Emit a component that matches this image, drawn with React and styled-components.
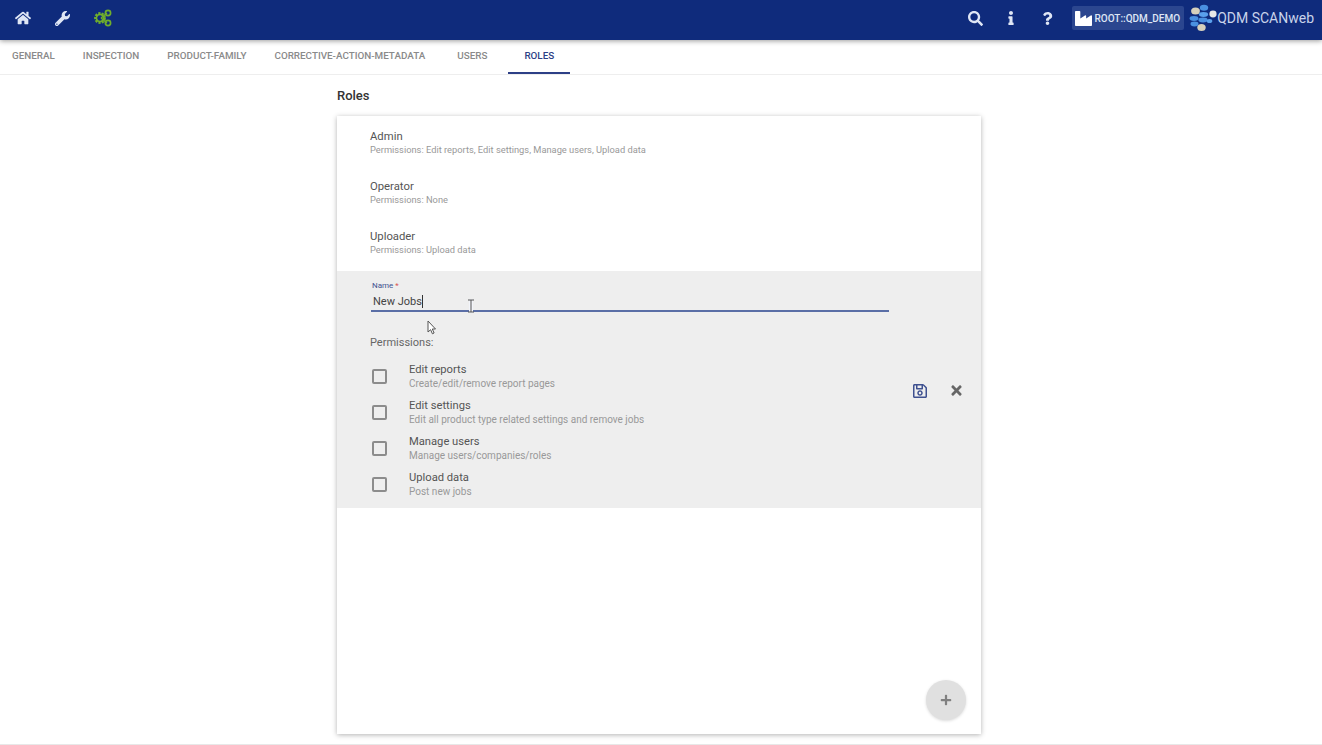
import styled, { createGlobalStyle } from "styled-components"
import { FaHome, FaWrench, FaSearch, FaInfo, FaQuestion, FaIndustry, FaRegSave, FaTimes, FaPlus } from "react-icons/fa"

const tabs = ["GENERAL", "INSPECTION", "PRODUCT-FAMILY", "CORRECTIVE-ACTION-METADATA", "USERS", "ROLES"]

const roles = [
  { name: "Admin", perms: "Permissions: Edit reports, Edit settings, Manage users, Upload data" },
  { name: "Operator", perms: "Permissions: None" },
  { name: "Uploader", perms: "Permissions: Upload data" },
]

const permissions = [
  { title: "Edit reports", text: "Create/edit/remove report pages" },
  { title: "Edit settings", text: "Edit all product type related settings and remove jobs" },
  { title: "Manage users", text: "Manage users/companies/roles" },
  { title: "Upload data", text: "Post new jobs" },
]

function GearsIcon() {
  return (
    <svg width="19" height="18" viewBox="0 0 19 18" fill="none">
      <path d="M8 9 L14 4 M8 9 L14 14" stroke="#6fae2c" strokeWidth="1.4" />
      <circle cx="7" cy="9" r="4.4" stroke="#6fae2c" strokeWidth="3" strokeDasharray="2 1.1" />
      <circle cx="7" cy="9" r="3.6" stroke="#6fae2c" strokeWidth="1.6" />
      <circle cx="15" cy="4" r="2.6" stroke="#6fae2c" strokeWidth="1.7" />
      <circle cx="15" cy="14" r="2.6" stroke="#6fae2c" strokeWidth="1.7" />
    </svg>
  )
}

function LogoIcon() {
  return (
    <svg width="28" height="28" viewBox="0 0 28 28">
      <ellipse cx="6.5" cy="7" rx="4.4" ry="3.6" fill="#d6d0bc" />
      <ellipse cx="15" cy="3.8" rx="4.2" ry="3" fill="#4a90e0" />
      <ellipse cx="24" cy="10" rx="3.6" ry="3.4" fill="#e8e8e8" />
      <ellipse cx="14.5" cy="10.5" rx="4.6" ry="2.4" fill="#5aa0ec" />
      <ellipse cx="5" cy="14.5" rx="4.4" ry="2.4" fill="#4a90e0" />
      <ellipse cx="14" cy="16" rx="4.6" ry="2.4" fill="#4a90e0" />
      <ellipse cx="5.5" cy="20" rx="4" ry="2.4" fill="#4a90e0" />
      <ellipse cx="20.5" cy="17" rx="2.8" ry="2" fill="#5aa0ec" />
      <ellipse cx="12.5" cy="23.5" rx="4.2" ry="3.6" fill="#d6d0bc" />
    </svg>
  )
}

export default function App() {
  return (
    <Page>
      <GlobalStyle />
      <Header>
        <NavIcons>
          <NavIcon><FaHome size={16} /></NavIcon>
          <NavIcon><FaWrench size={15} /></NavIcon>
          <NavIcon><GearsIcon /></NavIcon>
        </NavIcons>
        <HeaderRight>
          <ToolIcon><FaSearch size={15} /></ToolIcon>
          <ToolIcon><FaInfo size={14} /></ToolIcon>
          <ToolIcon><FaQuestion size={13} /></ToolIcon>
          <Company><FaIndustry size={17} color="white" />ROOT::QDM_DEMO</Company>
          <Brand><LogoIcon />QDM SCANweb</Brand>
        </HeaderRight>
      </Header>
      <TabBar>
        {tabs.map((t) => (
          <Tab key={t} active={t === "ROLES" ? "yes" : "no"}>{t}</Tab>
        ))}
      </TabBar>
      <Content>
        <Title>Roles</Title>
        <Card>
          <RoleList>
            {roles.map((r) => (
              <Role key={r.name}>
                <RoleName>{r.name}</RoleName>
                <RolePerms>{r.perms}</RolePerms>
              </Role>
            ))}
          </RoleList>
          <Editor>
            <EditorMain>
              <FieldLabel>Name<Required> *</Required></FieldLabel>
              <NameInput>New Jobs<Caret /></NameInput>
              <PermLabel>Permissions:</PermLabel>
              {permissions.map((p) => (
                <PermRow key={p.title}>
                  <Checkbox />
                  <div>
                    <PermTitle>{p.title}</PermTitle>
                    <PermText>{p.text}</PermText>
                  </div>
                </PermRow>
              ))}
            </EditorMain>
            <EditorActions>
              <FaRegSave size={16} color="#3f5190" />
              <FaTimes size={15} color="#666" />
            </EditorActions>
            <TextCursor>
              <svg width="8" height="14" viewBox="0 0 8 14" fill="none">
                <path d="M4 0v14" stroke="#f2f4fa" strokeWidth="4" />
                <path d="M1 1h6M4 1v12M1 13h6" stroke="#555" strokeWidth="1" />
              </svg>
            </TextCursor>
            <ArrowCursor>
              <svg width="10" height="15" viewBox="0 0 10 15">
                <path d="M1 1v11l2.6-2.3 1.8 4.1 1.7-.8-1.8-4h3.2z" fill="#fff" stroke="#555" strokeWidth="1" />
              </svg>
            </ArrowCursor>
          </Editor>
          <AddButton><FaPlus size={12} /></AddButton>
        </Card>
      </Content>
    </Page>
  )
}

const GlobalStyle = createGlobalStyle`
  html, body {
    margin: 0;
    padding: 0;
    background: white;
    font-family: Roboto, "Liberation Sans", sans-serif;
  }
  * { box-sizing: border-box; }
`

const Page = styled.div`
  width: 1322px;
  height: 745px;
  overflow: hidden;
  border-bottom: 1px solid #e8e8e8;
`

const Header = styled.header`
  position: relative;
  z-index: 2;
  height: 40px;
  padding: 0 8px 4px 13px;
  display: flex;
  justify-content: space-between;
  align-items: center;
  background: #0f2b7c;
  box-shadow: 0 1px 5px rgba(0, 0, 0, 0.4);
`

const NavIcons = styled.div`
  display: flex;
  align-items: center;
  gap: 21px;
`

const NavIcon = styled.span`
  width: 19px;
  display: flex;
  justify-content: center;
  color: #dfe6f5;
`

const HeaderRight = styled.div`
  display: flex;
  align-items: center;
  color: #dfe6f5;
`

const ToolIcon = styled.span`
  width: 36px;
  display: flex;
  justify-content: center;
`

const Company = styled.div`
  height: 24px;
  margin-left: 7px;
  padding: 0 4px 0 3px;
  display: flex;
  align-items: center;
  gap: 2px;
  border-radius: 2px;
  background: #2b468f;
  font-size: 10px;
  font-weight: 500;
`

const Brand = styled.div`
  margin-left: 5px;
  display: flex;
  align-items: center;
  font-size: 14px;
  color: #c9d3ea;
`

const TabBar = styled.nav`
  height: 35px;
  display: flex;
  border-bottom: 1px solid #eeeeee;
`

const Tab = styled.div`
  padding: 0 14px 1px;
  display: flex;
  align-items: center;
  font-size: 9.85px;
  font-weight: 500;
  color: ${(prop) => (prop.active === "yes" ? "#2d3f86" : "#8a8a8a")};
  border-bottom: 2px solid ${(prop) => (prop.active === "yes" ? "#2d3f86" : "transparent")};

  &:first-child {
    padding-left: 12px;
  }
  &:nth-child(5) {
    padding: 0 21px 1px 18px;
  }
  &:nth-child(6) {
    padding: 0 16px 1px;
  }
`

const Content = styled.main`
  width: 644px;
  margin-left: 337px;
`

const Title = styled.h2`
  margin: 0;
  height: 41px;
  padding-top: 13px;
  font-size: 13px;
  line-height: 15px;
  font-weight: 500;
  color: #333;
`

const Card = styled.section`
  position: relative;
  height: 618px;
  background: white;
  box-shadow: 0 1px 5px rgba(0, 0, 0, 0.3);
`

const RoleList = styled.div`
  height: 155px;
`

const Role = styled.div`
  height: 50px;
  padding: 14px 0 0 33px;
`

const RoleName = styled.div`
  font-size: 11.3px;
  line-height: 13px;
  color: #555;
`

const RolePerms = styled.div`
  margin-top: 1px;
  font-size: 9.3px;
  line-height: 11px;
  color: #999;
`

const Editor = styled.div`
  position: relative;
  height: 237px;
  display: flex;
  background: #eeeeee;
`

const EditorMain = styled.div`
  width: 552px;
  padding: 10px 0 0 33px;
`

const FieldLabel = styled.div`
  padding-left: 2px;
  font-size: 8px;
  line-height: 10px;
  color: #3f5190;
`

const Required = styled.span`
  color: #d9534f;
`

const NameInput = styled.div`
  height: 21px;
  width: 518px;
  margin-left: 1px;
  padding: 4px 0 0 2px;
  display: flex;
  font-size: 11px;
  line-height: 14px;
  color: #444;
  border-bottom: 2px solid #5a6ea6;
`

const Caret = styled.span`
  width: 1px;
  height: 13px;
  background: #333;
`

const PermLabel = styled.div`
  margin: 24px 0 8px;
  font-size: 11px;
  line-height: 14px;
  color: #666;
`

const PermRow = styled.div`
  height: 36px;
  display: flex;
  align-items: center;
  gap: 22px;
`

const Checkbox = styled.span`
  width: 15px;
  height: 15px;
  margin-left: 2px;
  border: 2px solid #8c8c8c;
  border-radius: 2px;
`

const PermTitle = styled.div`
  font-size: 11.2px;
  line-height: 14px;
  color: #555;
`

const PermText = styled.div`
  font-size: 10px;
  line-height: 13px;
  color: #999;
`

const EditorActions = styled.div`
  width: 52px;
  margin-left: 23px;
  padding-top: 112px;
  display: flex;
  justify-content: space-between;
  align-items: flex-start;
`

const TextCursor = styled.span`
  position: absolute;
  left: 130px;
  top: 28px;
  display: flex;
`

const ArrowCursor = styled.span`
  position: absolute;
  left: 90px;
  top: 49px;
  display: flex;
`

const AddButton = styled.div`
  position: absolute;
  right: 15px;
  bottom: 14px;
  width: 40px;
  height: 40px;
  display: flex;
  justify-content: center;
  align-items: center;
  border-radius: 50%;
  background: #e0e0e0;
  color: #808080;
  box-shadow: 0 1px 3px rgba(0, 0, 0, 0.15);
`
